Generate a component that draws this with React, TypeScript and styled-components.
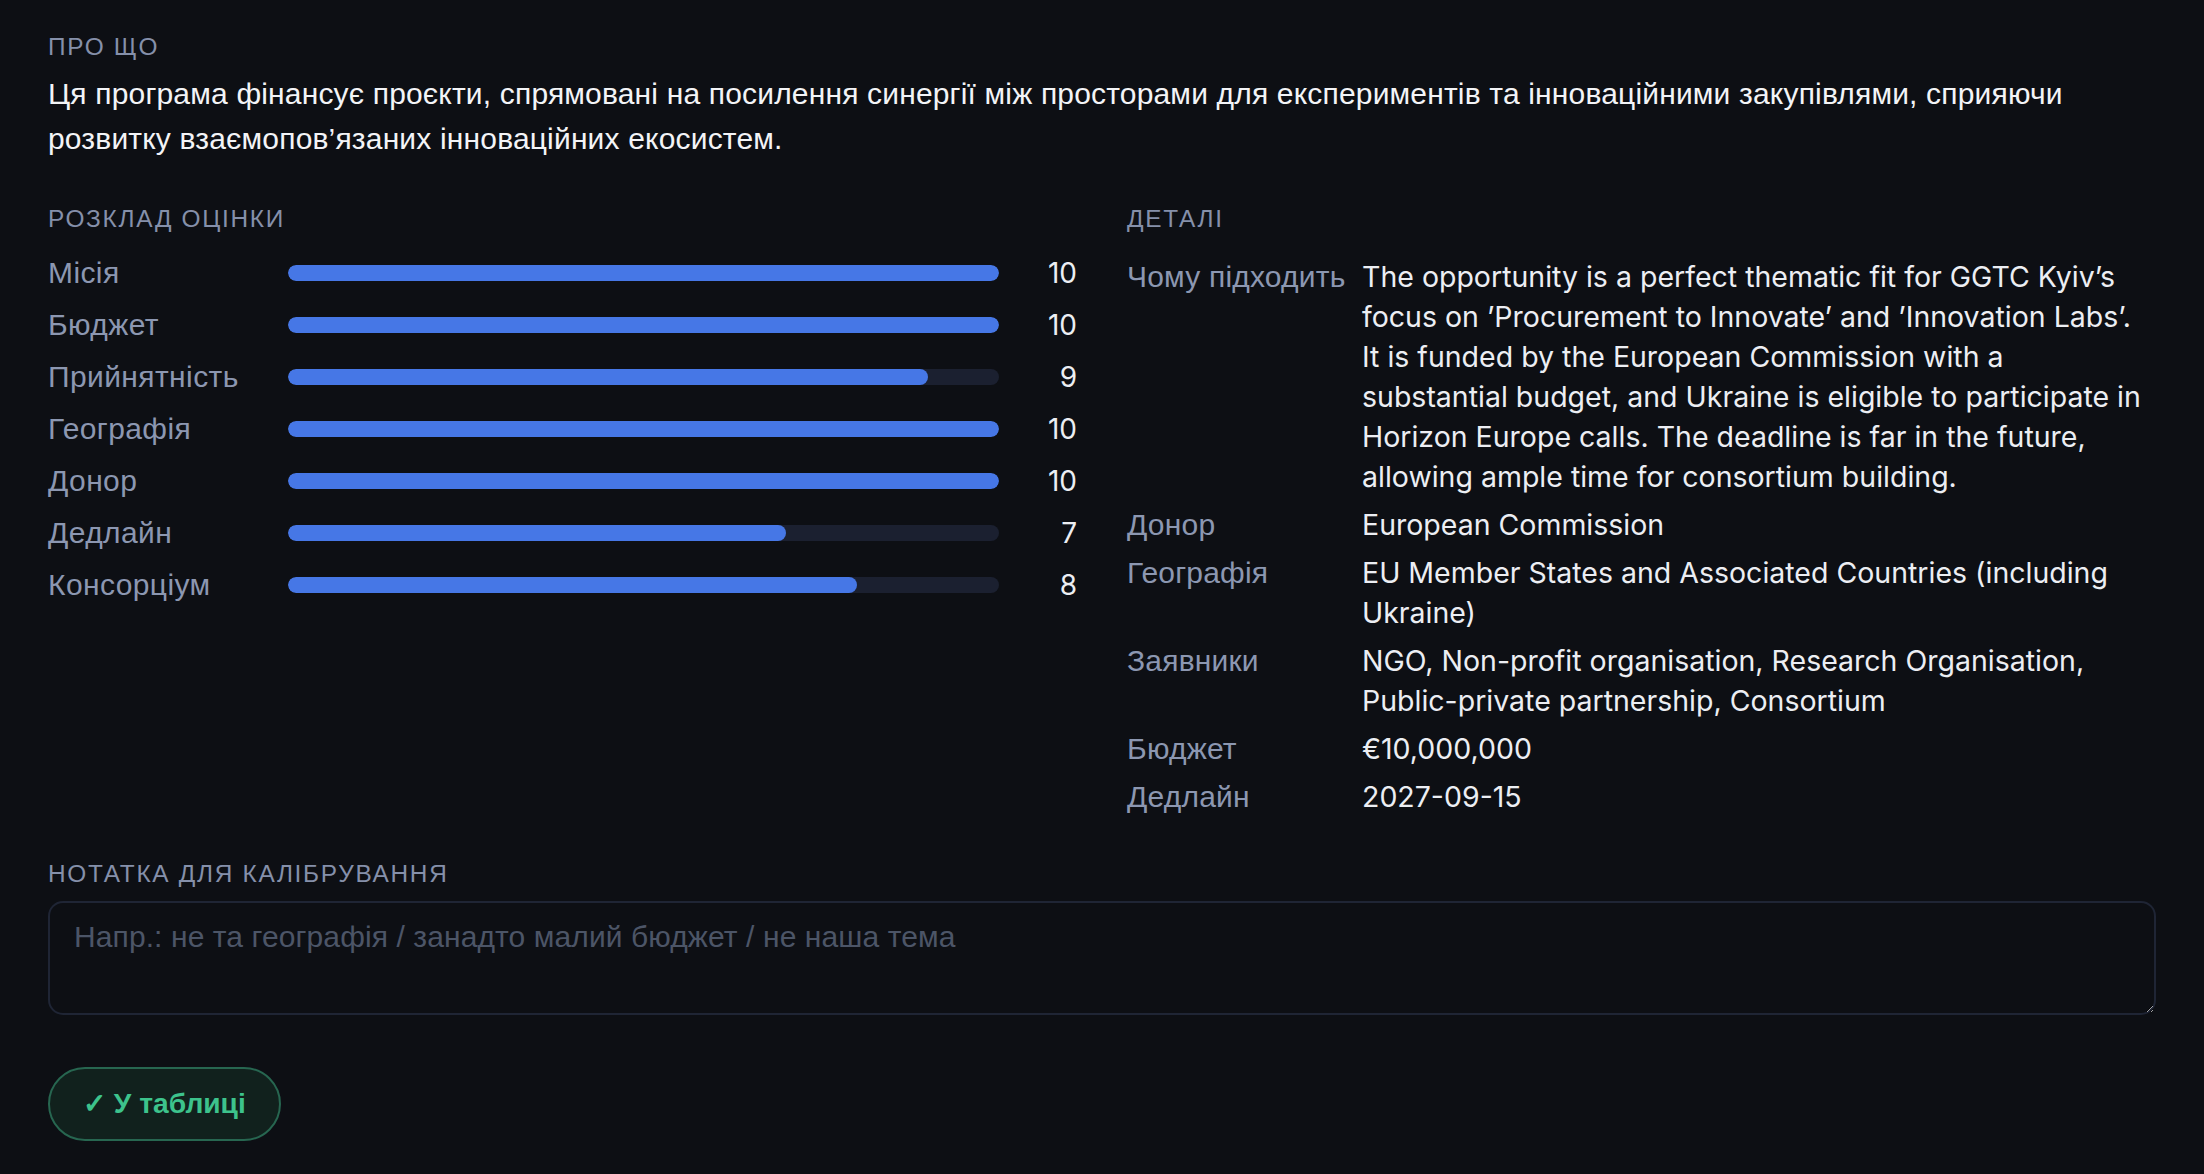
import React from 'react';
import styled, {createGlobalStyle} from 'styled-components';

const GlobalStyle = createGlobalStyle`
  html, body {
    margin: 0;
    padding: 0;
    background: #0d0f14;
  }
  * {
    box-sizing: border-box;
  }
`;

type Score = {label: string; value: number};

const scores: Score[] = [
  {label: 'Місія', value: 10},
  {label: 'Бюджет', value: 10},
  {label: 'Прийнятність', value: 9},
  {label: 'Географія', value: 10},
  {label: 'Донор', value: 10},
  {label: 'Дедлайн', value: 7},
  {label: 'Консорціум', value: 8},
];

const details: {label: string; value: string}[] = [
  {
    label: 'Чому підходить',
    value:
      'The opportunity is a perfect thematic fit for GGTC Kyiv’s focus on ’Procurement to Innovate’ and ’Innovation Labs’. It is funded by the European Commission with a substantial budget, and Ukraine is eligible to participate in Horizon Europe calls. The deadline is far in the future, allowing ample time for consortium building.',
  },
  {label: 'Донор', value: 'European Commission'},
  {
    label: 'Географія',
    value: 'EU Member States and Associated Countries (including Ukraine)',
  },
  {
    label: 'Заявники',
    value:
      'NGO, Non-profit organisation, Research Organisation, Public-private partnership, Consortium',
  },
  {label: 'Бюджет', value: '€10,000,000'},
  {label: 'Дедлайн', value: '2027-09-15'},
];

export default function App() {
  const [note, setNote] = React.useState('');

  return (
    <>
      <GlobalStyle />
      <Page>
        <section>
          <Label $gap={5}>Про що</Label>
          <Summary>
            Ця програма фінансує проєкти, спрямовані на посилення синергії між
            просторами для експериментів та інноваційними закупівлями, сприяючи
            розвитку взаємопов’язаних інноваційних екосистем.
          </Summary>
        </section>

        <Columns>
          <section>
            <Label $gap={18}>Розклад оцінки</Label>
            <ScoreList>
              {scores.map(s => (
                <React.Fragment key={s.label}>
                  <ScoreName>{s.label}</ScoreName>
                  <Track>
                    <Fill style={{width: `${s.value * 10}%`}} />
                  </Track>
                  <ScoreValue>{s.value}</ScoreValue>
                </React.Fragment>
              ))}
            </ScoreList>
          </section>

          <section>
            <Label $gap={18}>Деталі</Label>
            <DetailList>
              {details.map(d => (
                <React.Fragment key={d.label}>
                  <DetailName>{d.label}</DetailName>
                  <DetailValue>{d.value}</DetailValue>
                </React.Fragment>
              ))}
            </DetailList>
          </section>
        </Columns>

        <NoteSection>
          <Label $gap={8}>Нотатка для калібрування</Label>
          <NoteInput
            value={note}
            onChange={e => setNote(e.target.value)}
            placeholder="Напр.: не та географія / занадто малий бюджет / не наша тема"
          />
        </NoteSection>

        <Actions>
          <DoneButton type="button">✓ У таблиці</DoneButton>
        </Actions>
      </Page>
    </>
  );
}

const Page = styled.main`
  padding: 29px 48px 34px;
  font-family: 'Liberation Sans', Arial, sans-serif;
  color: #f3f4f7;
`;

const Label = styled.h3<{$gap: number}>`
  margin: 0 0 ${p => p.$gap}px;
  font-size: 24.4px;
  line-height: 36.6px;
  font-weight: 400;
  letter-spacing: 1.7px;
  text-transform: uppercase;
  color: #8590aa;
`;

const Summary = styled.p`
  margin: 0;
  font-size: 30px;
  line-height: 45px;
  letter-spacing: 0.17px;
  color: #f3f4f7;
`;

const Columns = styled.div`
  display: grid;
  grid-template-columns: 1fr 1fr;
  column-gap: 50px;
  margin-top: 40px;
`;

const ScoreList = styled.div`
  display: grid;
  grid-template-columns: 224px 1fr 62px;
  column-gap: 16px;
  row-gap: 16px;
  align-items: center;
`;

const ScoreName = styled.span`
  font-size: 30px;
  line-height: 36px;
  letter-spacing: 0.4px;
  color: #8c97b1;
`;

const Track = styled.div`
  height: 16px;
  border-radius: 8px;
  background: #1b2030;
  overflow: hidden;
`;

const Fill = styled.div`
  height: 100%;
  border-radius: 8px;
  background: #4677e6;
`;

const ScoreValue = styled.span`
  font-family: Inter, 'Liberation Sans', sans-serif;
  font-size: 28px;
  line-height: 36px;
  text-align: right;
  color: #eceef3;
`;

const DetailList = styled.dl`
  display: grid;
  grid-template-columns: 216px 1fr;
  column-gap: 19px;
  row-gap: 8px;
  margin: 0;
  padding-top: 2px;
  align-items: baseline;
`;

const DetailName = styled.dt`
  font-size: 30px;
  line-height: 40px;
  letter-spacing: 0.2px;
  color: #8c97b1;
  white-space: nowrap;
`;

const DetailValue = styled.dd`
  margin: 0;
  font-family: Inter, 'Liberation Sans', sans-serif;
  font-size: 28.5px;
  line-height: 40px;
  color: #eceef3;
`;

const NoteSection = styled.section`
  margin-top: 39px;
`;

const NoteInput = styled.textarea`
  display: block;
  width: 100%;
  height: 114px;
  padding: 11px 24px;
  border: 2px solid #1f2535;
  border-radius: 15px;
  background: #0d0f14;
  color: #eceef3;
  font-family: 'Liberation Sans', Arial, sans-serif;
  font-size: 30px;
  line-height: 45px;
  letter-spacing: 0.1px;
  resize: vertical;
  outline: none;

  &::placeholder {
    color: #4c5567;
  }
`;

const Actions = styled.div`
  display: flex;
  margin-top: 52px;
`;

const DoneButton = styled.button`
  display: inline-flex;
  align-items: center;
  height: 74px;
  padding: 0 33px;
  border: 2px solid #276650;
  border-radius: 37px;
  background: #11211d;
  color: #3dc38c;
  font-family: 'Liberation Sans', Arial, sans-serif;
  font-size: 28.2px;
  font-weight: 700;
  cursor: pointer;
`;
